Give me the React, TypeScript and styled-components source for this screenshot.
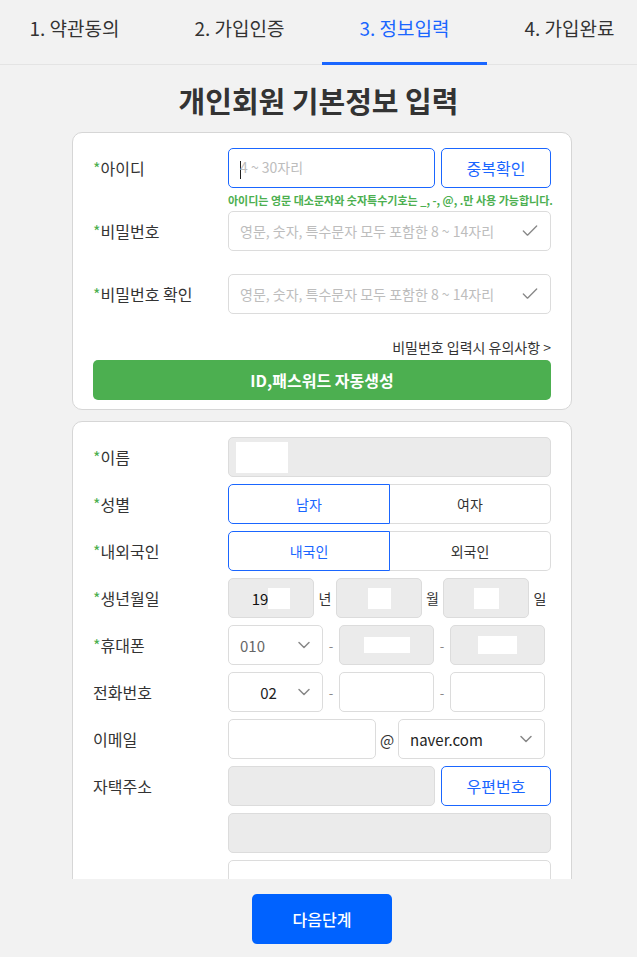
import styled, { createGlobalStyle } from 'styled-components';
import { Check, ChevronDown } from 'lucide-react';

const GlobalStyle = createGlobalStyle`
  * { box-sizing: border-box; }
  body {
    margin: 0;
    background: #f2f2f2;
    font-family: "Noto Sans CJK KR", "Noto Sans", sans-serif;
    color: #333;
  }
  button { font-family: inherit; cursor: pointer; }
`

const BLUE = '#1a66ff';
const GREEN = '#4caf50';

const Page = styled.div`
  display: flex;
  flex-direction: column;
  height: 100vh;
  overflow: hidden;
`
const TabBar = styled.div`
  flex: none;
  height: 65px;
  overflow: hidden;
  box-shadow: inset 0 -1px 0 #e4e4e4;
`
const TabTrack = styled.div`
  display: flex;
  margin-left: -8px;
`
const Tab = styled.div<{ $active?: boolean }>`
  flex: none;
  width: 165px;
  height: 65px;
  padding-top: 14px;
  text-align: center;
  font-size: 19px;
  line-height: 28px;
  color: ${p => (p.$active ? BLUE : '#333')};
  border-bottom: 3px solid ${p => (p.$active ? BLUE : 'transparent')};
`
const Content = styled.div`
  flex: 1;
  min-height: 0;
  overflow: hidden;
`
const Title = styled.h1`
  margin: 0;
  padding: 16px 0 13px;
  text-align: center;
  font-size: 29px;
  line-height: 38px;
  font-weight: 700;
  color: #333;
`
const Card = styled.div<{ $gap?: number }>`
  width: 500px;
  margin: 0 0 11px 72px;
  padding: 15px 20px 9px 20px;
  background: #fff;
  border: 1px solid #d6d6d6;
  border-radius: 10px;
  display: flex;
  flex-direction: column;
  gap: ${p => p.$gap ?? 0}px;
`
const Row = styled.div<{ $tall?: boolean }>`
  display: grid;
  grid-template-columns: 135px 323px;
  align-items: start;
  min-height: ${p => (p.$tall ? 63 : 40)}px;
`
const Label = styled.div`
  height: 40px;
  display: flex;
  align-items: center;
  font-size: 16px;
  color: #333;
`
const Star = styled.span`
  color: ${GREEN};
`
const Field = styled.div`
  display: flex;
  flex-direction: column;
`
const Line = styled.div`
  display: flex;
  gap: 6px;
  height: 40px;
`
const TextBox = styled.div<{ $focus?: boolean; $gray?: boolean }>`
  flex: 1;
  min-width: 0;
  height: 40px;
  display: flex;
  align-items: center;
  justify-content: space-between;
  padding: 0 10px 0 11px;
  border: 1px solid ${p => (p.$focus ? BLUE : '#dcdcdc')};
  border-radius: 5px;
  background: ${p => (p.$gray ? '#ebebeb' : '#fff')};
  font-size: 14px;
  color: #bbb;
  svg { flex: none; color: #888; }
`
const Placeholder = styled.span`
  color: #bdbdbd;
  font-size: 14px;
`
const Caret = styled.span`
  display: inline-block;
  width: 1px;
  height: 18px;
  background: #222;
  margin-right: -1px;
  vertical-align: middle;
`
const Hint = styled.div`
  margin: 4px 0 3px;
  font-size: 11px;
  line-height: 16px;
  font-weight: 700;
  color: ${GREEN};
  white-space: nowrap;
  letter-spacing: 0;
`
const OutlineButton = styled.button`
  flex: none;
  width: 110px;
  height: 40px;
  border: 1px solid ${BLUE};
  border-radius: 5px;
  background: #fff;
  color: ${BLUE};
  font-size: 16px;
  padding: 0;
`
const NoteLink = styled.div`
  text-align: right;
  font-size: 14px;
  line-height: 20px;
  color: #333;
  margin-bottom: 3px;
`
const GreenButton = styled.button`
  height: 40px;
  width: 100%;
  border: none;
  border-radius: 5px;
  background: ${GREEN};
  color: #fff;
  font-size: 16px;
  font-weight: 700;
`
const Segment = styled.div`
  display: flex;
  height: 40px;
`
const SegmentItem = styled.div<{ $active?: boolean; $first?: boolean }>`
  flex: 1;
  display: flex;
  align-items: center;
  justify-content: center;
  font-size: 14px;
  color: ${p => (p.$active ? BLUE : '#333')};
  border: 1px solid ${p => (p.$active ? BLUE : '#dcdcdc')};
  border-radius: ${p => (p.$first ? '5px 0 0 5px' : '0 5px 5px 0')};
  ${p => (!p.$first ? 'border-left: none;' : '')}
  background: #fff;
`
const Mask = styled.span<{ $w: number; $h: number }>`
  display: inline-block;
  flex: none;
  width: ${p => p.$w}px;
  height: ${p => p.$h}px;
  background: #fff;
`
const NameMask = styled(Mask)`
  margin-left: -4px;
`
const BirthGrid = styled.div`
  display: grid;
  grid-template-columns: 86px 22px 86px 21px 86px 22px;
  height: 40px;
  align-items: center;
`
const Unit = styled.span`
  text-align: center;
  font-size: 14px;
  color: #333;
`
const CenterBox = styled(TextBox)`
  justify-content: center;
  padding: 0;
  color: #111;
  font-size: 15px;
`
const InputGrid = styled.div<{ $cols: string }>`
  display: grid;
  grid-template-columns: ${p => p.$cols};
  height: 40px;
  align-items: center;
`
const Dash = styled.span`
  text-align: center;
  font-size: 13px;
  color: #888;
`
const At = styled.span`
  text-align: center;
  font-size: 15px;
  color: #333;
`
const SelectBox = styled.div<{ $center?: boolean; $dim?: boolean }>`
  height: 40px;
  display: flex;
  align-items: center;
  padding: 0 8px 0 ${p => (p.$center ? 14 : 11)}px;
  border: 1px solid #dcdcdc;
  border-radius: 5px;
  background: #fff;
  font-size: 15px;
  color: ${p => (p.$dim ? '#666' : '#222')};
  span {
    flex: 1;
    text-align: ${p => (p.$center ? 'center' : 'left')};
  }
  svg { flex: none; color: #888; }
`
const Footer = styled.div`
  flex: none;
  height: 78px;
  padding: 15px 0 0 7px;
  display: flex;
  justify-content: center;
  background: #f2f2f2;
`
const NextButton = styled.button`
  width: 140px;
  height: 50px;
  border: none;
  border-radius: 5px;
  background: #0062ff;
  color: #fff;
  font-size: 16px;
  font-weight: 500;
`

const tabs = ['1. 약관동의', '2. 가입인증', '3. 정보입력', '4. 가입완료'];

const Req = ({ children }: { children: string }) => (
  <Label><Star>*</Star>{children}</Label>
);

const Chevron = () => <ChevronDown size={20} strokeWidth={1.8} />;

export default function App() {
  return (
    <Page>
      <GlobalStyle />
      <TabBar>
        <TabTrack>
          {tabs.map((t, i) => (
            <Tab key={t} $active={i === 2}>{t}</Tab>
          ))}
        </TabTrack>
      </TabBar>
      <Content>
        <Title>개인회원 기본정보 입력</Title>
        <Card>
          <Row $tall>
            <Req>아이디</Req>
            <Field>
              <Line>
                <TextBox $focus>
                  <span><Caret /><Placeholder>4 ~ 30자리</Placeholder></span>
                </TextBox>
                <OutlineButton>중복확인</OutlineButton>
              </Line>
              <Hint>아이디는 영문 대소문자와 숫자특수기호는 _, -, @, .만 사용 가능합니다.</Hint>
            </Field>
          </Row>
          <Row $tall>
            <Req>비밀번호</Req>
            <TextBox>
              <Placeholder>영문, 숫자, 특수문자 모두 포함한 8 ~ 14자리</Placeholder>
              <Check size={20} strokeWidth={1.6} />
            </TextBox>
          </Row>
          <Row $tall>
            <Req>비밀번호 확인</Req>
            <TextBox>
              <Placeholder>영문, 숫자, 특수문자 모두 포함한 8 ~ 14자리</Placeholder>
              <Check size={20} strokeWidth={1.6} />
            </TextBox>
          </Row>
          <NoteLink>비밀번호 입력시 유의사항 &gt;</NoteLink>
          <GreenButton>ID,패스워드 자동생성</GreenButton>
        </Card>

        <Card $gap={7}>
          <Row>
            <Req>이름</Req>
            <TextBox $gray>
              <NameMask $w={52} $h={31} />
            </TextBox>
          </Row>
          <Row>
            <Req>성별</Req>
            <Segment>
              <SegmentItem $first $active>남자</SegmentItem>
              <SegmentItem>여자</SegmentItem>
            </Segment>
          </Row>
          <Row>
            <Req>내외국인</Req>
            <Segment>
              <SegmentItem $first $active>내국인</SegmentItem>
              <SegmentItem>외국인</SegmentItem>
            </Segment>
          </Row>
          <Row>
            <Req>생년월일</Req>
            <BirthGrid>
              <CenterBox $gray>19<Mask $w={22} $h={21} /></CenterBox>
              <Unit>년</Unit>
              <CenterBox $gray><Mask $w={23} $h={21} /></CenterBox>
              <Unit>월</Unit>
              <CenterBox $gray><Mask $w={25} $h={21} /></CenterBox>
              <Unit>일</Unit>
            </BirthGrid>
          </Row>
          <Row>
            <Req>휴대폰</Req>
            <InputGrid $cols="95px 16px 95px 16px 95px">
              <SelectBox $dim><span>010</span><Chevron /></SelectBox>
              <Dash>-</Dash>
              <CenterBox $gray><Mask $w={46} $h={16} /></CenterBox>
              <Dash>-</Dash>
              <CenterBox $gray><Mask $w={39} $h={18} /></CenterBox>
            </InputGrid>
          </Row>
          <Row>
            <Label>전화번호</Label>
            <InputGrid $cols="95px 16px 95px 16px 95px">
              <SelectBox $center><span>02</span><Chevron /></SelectBox>
              <Dash>-</Dash>
              <TextBox />
              <Dash>-</Dash>
              <TextBox />
            </InputGrid>
          </Row>
          <Row>
            <Label>이메일</Label>
            <InputGrid $cols="148px 22px 147px">
              <TextBox />
              <At>@</At>
              <SelectBox><span>naver.com</span><Chevron /></SelectBox>
            </InputGrid>
          </Row>
          <Row>
            <Label>자택주소</Label>
            <Line>
              <TextBox $gray />
              <OutlineButton>우편번호</OutlineButton>
            </Line>
          </Row>
          <Row>
            <span />
            <TextBox $gray />
          </Row>
          <Row>
            <span />
            <TextBox />
          </Row>
        </Card>
      </Content>
      <Footer>
        <NextButton>다음단계</NextButton>
      </Footer>
    </Page>
  );
}
